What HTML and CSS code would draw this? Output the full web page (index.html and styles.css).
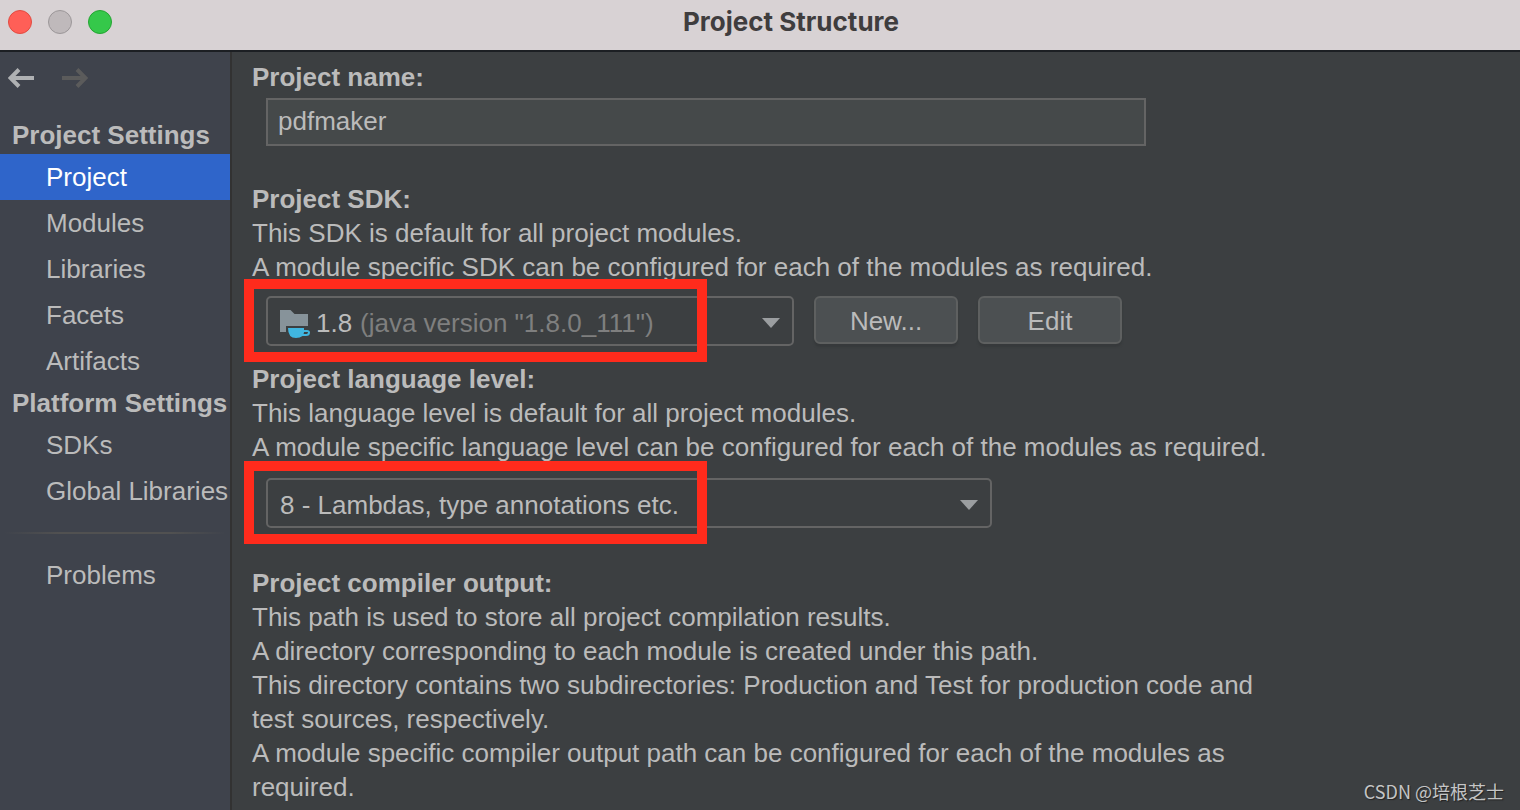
FILE: index.html
```
<!DOCTYPE html>
<html lang="en">

<head>
    <meta charset="UTF-8" />
    <meta name="viewport" content="width=device-width, initial-scale=1" />
    <title>Project Structure</title>
    <link rel="stylesheet" href="styles.css">
</head>

<body>
    <header class="titlebar">
        <div class="lights">
            <button type="button" class="light close" aria-label="Close"></button>
            <button type="button" class="light minimize" aria-label="Minimize" disabled></button>
            <button type="button" class="light expand" aria-label="Expand"></button>
        </div>
        <h1>Project Structure</h1>
    </header>

    <div class="window">
        <aside class="sidebar">
            <div class="history">
                <button type="button" aria-label="Back">
                    <svg width="26" height="20" viewBox="0 0 26 20">
                        <path d="M26 10H3M11 1.5L2.5 10L11 18.5" />
                    </svg>
                </button>
                <button type="button" aria-label="Forward" disabled>
                    <svg width="26" height="20" viewBox="0 0 26 20">
                        <path d="M0 10H23M15 1.5L23.5 10L15 18.5" />
                    </svg>
                </button>
            </div>
            <nav>
                <h2>Project Settings</h2>
                <ul>
                    <li><a href="#project" class="active">Project</a></li>
                    <li><a href="#modules">Modules</a></li>
                    <li><a href="#libraries">Libraries</a></li>
                    <li><a href="#facets">Facets</a></li>
                    <li><a href="#artifacts">Artifacts</a></li>
                </ul>
                <h2>Platform Settings</h2>
                <ul>
                    <li><a href="#sdks">SDKs</a></li>
                    <li><a href="#global-libraries">Global Libraries</a></li>
                </ul>
                <hr>
                <ul>
                    <li><a href="#problems">Problems</a></li>
                </ul>
            </nav>
        </aside>

        <main id="project">
            <section class="name">
                <label for="project-name">Project name:</label>
                <input type="text" id="project-name" value="pdfmaker" spellcheck="false" />
            </section>

            <section class="sdk">
                <label for="project-sdk">Project SDK:</label>
                <p>This SDK is default for all project modules.</p>
                <p>A module specific SDK can be configured for each of the modules as required.</p>
                <div class="controls">
                    <div class="dropdown sdk-dropdown">
                        <select id="project-sdk">
                            <option>1.8</option>
                        </select>
                        <svg class="folder" width="30" height="28" viewBox="0 0 30 28">
                            <path fill="#87939a" d="M0 0H10.5L14.5 4H28V16H6V22H0Z" />
                            <path fill="#40b6e0" fill-rule="evenodd" d="M8 18H24V20H27Q30 20 30 22.5Q30 26 26 26H22.5Q20 28 16 28Q8 28 8 18ZM24 22Q24 23 23.5 24H26.5Q28 24 28 22Z" />
                        </svg>
                        <span class="version">(java version "1.8.0_111")</span>
                        <svg class="arrow" width="18" height="10" viewBox="0 0 18 10">
                            <path d="M0 0H18L9 10Z" />
                        </svg>
                        <div class="highlight"></div>
                    </div>
                    <button type="button" class="btn">New...</button>
                    <button type="button" class="btn">Edit</button>
                </div>
            </section>

            <section class="level">
                <label for="language-level">Project language level:</label>
                <p>This language level is default for all project modules.</p>
                <p>A module specific language level can be configured for each of the modules as required.</p>
                <div class="controls">
                    <div class="dropdown level-dropdown">
                        <select id="language-level">
                            <option>8 - Lambdas, type annotations etc.</option>
                        </select>
                        <svg class="arrow" width="18" height="10" viewBox="0 0 18 10">
                            <path d="M0 0H18L9 10Z" />
                        </svg>
                        <div class="highlight"></div>
                    </div>
                </div>
            </section>

            <section class="output">
                <h3>Project compiler output:</h3>
                <p>This path is used to store all project compilation results.</p>
                <p>A directory corresponding to each module is created under this path.</p>
                <p>This directory contains two subdirectories: Production and Test for production code and test sources, respectively.</p>
                <p>A module specific compiler output path can be configured for each of the modules as required.</p>
            </section>
        </main>
    </div>

    <div class="watermark">CSDN @培根芝士</div>
</body>

</html>
```

FILE: styles.css
```
/* Reset & base */
* {
    margin: 0;
    padding: 0;
    box-sizing: border-box;
}

body {
    position: relative;
    display: flex;
    flex-direction: column;
    min-height: 100vh;
    background-color: #3c3f41;
    color: #bbbbbb;
    font-family: "Liberation Sans", Arial, sans-serif;
    font-size: 26px;
    line-height: 34px;
}

button,
input,
select {
    font: inherit;
    color: inherit;
}

/* Title bar */
.titlebar {
    display: flex;
    align-items: center;
    height: 52px;
    padding: 0 50px 6px 8px;
    background-color: #d8d2d4;
    border-bottom: 2px solid #1c1f23;
}

.lights {
    display: flex;
    gap: 16px;
}

.light {
    width: 24px;
    height: 24px;
    border: 1px solid #e24b41;
    border-radius: 50%;
    background-color: #ff5f57;
}

.minimize {
    background-color: #bfb9bb;
    border-color: #9c9799;
}

.expand {
    background-color: #35c84a;
    border-color: #24a532;
}

h1 {
    flex: 1;
    text-align: center;
    color: #3f3d3e;
    font-family: Inter, sans-serif;
    font-size: 26px;
    font-weight: 700;
}

/* Sidebar */
.window {
    display: flex;
    flex: 1;
}

.sidebar {
    flex: 0 0 232px;
    background-color: #3f434c;
    border-right: 2px solid #323232;
    white-space: nowrap;
}

.history {
    display: flex;
    align-items: center;
    gap: 28px;
    height: 52px;
    padding-left: 8px;
    margin-bottom: 12px;
}

.history button {
    display: flex;
    background: none;
    border: none;
}

.history path {
    fill: none;
    stroke: #afb1b3;
    stroke-width: 4;
}

.history button:disabled path {
    stroke: #5b5b5b;
}

h2 {
    padding-left: 12px;
    font-size: 26px;
    line-height: 38px;
}

.sidebar ul {
    list-style: none;
}

.sidebar a {
    display: block;
    padding-left: 46px;
    color: inherit;
    line-height: 46px;
    text-decoration: none;
}

.sidebar a.active {
    background-color: #2f65ca;
    color: white;
}

hr {
    height: 2px;
    margin: 18px 4px;
    border: none;
    background: linear-gradient(to right, transparent, #515151 25%, #515151 75%, transparent);
}

/* Project page */
main {
    flex: 1;
    padding: 8px 20px 6px;
}

label,
h3 {
    display: block;
    font-size: 26px;
    font-weight: 700;
}

p {
    max-width: 1040px;
}

.name {
    margin-bottom: 36px;
}

.name input {
    display: block;
    width: 100%;
    max-width: 880px;
    height: 48px;
    margin: 4px 0 0 14px;
    padding: 0 10px 2px;
    background-color: #45494a;
    border: 2px solid #646464;
    outline: none;
}

.controls {
    display: flex;
    gap: 20px;
    margin: 12px 0 16px 14px;
}

.level .controls {
    margin: 14px 0 38px 14px;
}

.dropdown {
    position: relative;
    height: 50px;
}

.sdk-dropdown {
    width: 528px;
}

.level-dropdown {
    width: 726px;
}

.dropdown select {
    width: 100%;
    height: 100%;
    padding: 4px 40px 0 12px;
    appearance: none;
    background-color: #3c3f41;
    border: 2px solid #646464;
    border-radius: 5px;
    outline: none;
}

.sdk-dropdown select {
    padding-left: 48px;
}

.folder,
.version,
.arrow {
    position: absolute;
    pointer-events: none;
}

.folder {
    top: 14px;
    left: 14px;
}

.version {
    top: 10px;
    left: 94px;
    color: #7f7f7f;
}

.arrow {
    top: 22px;
    right: 14px;
    fill: #9b9ea0;
}

.highlight {
    position: absolute;
    top: -17px;
    left: -22px;
    width: 463px;
    height: 83px;
    border: 10px solid #ff2b1c;
    pointer-events: none;
}

.btn {
    width: 144px;
    height: 48px;
    padding-top: 2px;
    background-color: #4c5052;
    border: 2px solid #5e6060;
    border-radius: 6px;
    box-shadow: 0 3px 2px #36393b;
}

/* Watermark */
.watermark {
    position: absolute;
    right: 16px;
    bottom: 6px;
    color: #c4c5c6;
    font-family: "Noto Sans CJK SC", sans-serif;
    font-size: 18px;
    line-height: 26px;
    text-shadow: 1px 1px 1px #222222;
}
```
